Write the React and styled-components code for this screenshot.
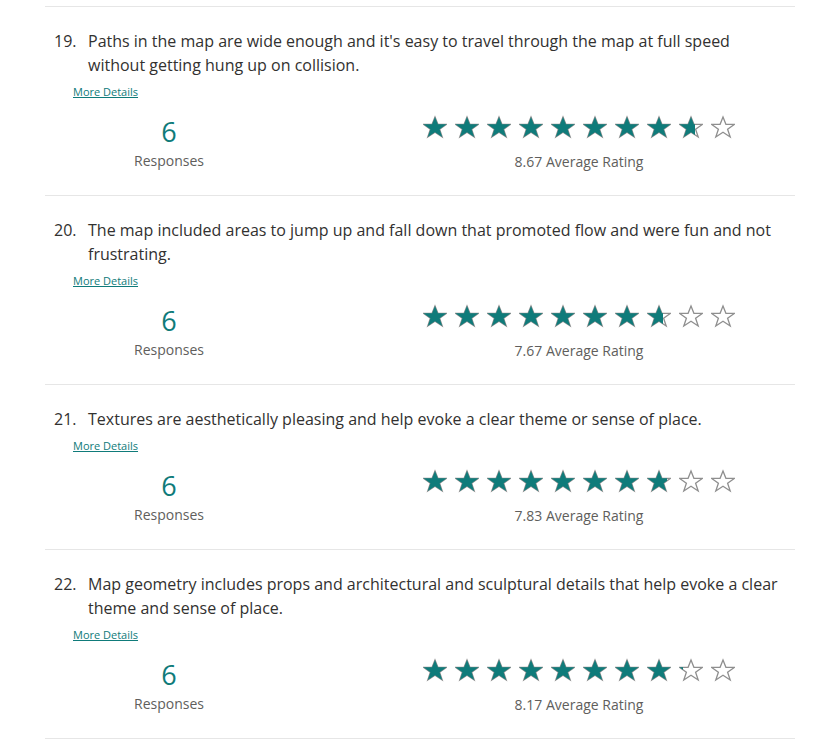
import React from "react";
import styled, { createGlobalStyle } from "styled-components";

const GlobalStyle = createGlobalStyle`
  body {
    margin: 0;
    background: #ffffff;
    font-family: "Open Sans", "Noto Sans", sans-serif;
    color: #333333;
  }
`;

const teal = "#0f7b7a";

const List = styled.div`
  width: 750px;
  margin-left: 45px;
  padding-top: 6px;
`;

const Item = styled.section`
  border-top: 1px solid #e6e6e6;
  padding: 22px 0 23px;
  &:last-child {
    border-bottom: 1px solid #e6e6e6;
  }
`;

const Question = styled.div`
  display: flex;
  padding-right: 12px;
  font-size: 16px;
  line-height: 24px;
  color: #323130;
`;

const Number = styled.span`
  flex: 0 0 34px;
  padding-left: 9px;
`;

const Text = styled.span`
  flex: 1;
`;

const DetailsLink = styled.a`
  display: inline-block;
  margin: 8px 0 0 28px;
  font-size: 11px;
  line-height: 14px;
  color: ${teal};
  text-decoration: underline;
  cursor: pointer;
`;

const Stats = styled.div`
  display: flex;
  align-items: flex-start;
  margin: 14px 0 0 28px;
`;

const Count = styled.div`
  width: 192px;
  display: flex;
  flex-direction: column;
  align-items: center;
`;

const CountValue = styled.div`
  font-size: 27px;
  line-height: 34px;
  color: ${teal};
`;

const Label = styled.div`
  margin-top: ${({ $top }) => $top || 0}px;
  font-size: 14px;
  line-height: 20px;
  color: #605e5c;
`;

const Rating = styled.div`
  margin-left: 158px;
  display: flex;
  flex-direction: column;
  align-items: center;
`;

const Stars = styled.div`
  display: flex;
  gap: 8px;
`;

const StarSvg = styled.svg`
  display: block;
  width: 24px;
  height: 24px;
`;

const points = "12,2 14.9,9.3 23.6,9.3 16.6,14.2 19.2,22 12,17.3 4.8,22 7.4,14.2 0.4,9.3 9.1,9.3";

function Star({ fill, id }) {
  return (
    <StarSvg viewBox="0 0 24 24">
      <defs>
        <clipPath id={id}>
          <rect x="0" y="0" width={24 * fill} height="24" />
        </clipPath>
      </defs>
      <polygon points={points} fill="#ffffff" stroke="#8f8f8f" strokeWidth="1.3" />
      {fill > 0 && <polygon points={points} fill={teal} clipPath={`url(#${id})`} />}
    </StarSvg>
  );
}

const items = [
  {
    n: 19,
    q: "Paths in the map are wide enough and it's easy to travel through the map at full speed without getting hung up on collision.",
    rating: 8.67,
  },
  {
    n: 20,
    q: "The map included areas to jump up and fall down that promoted flow and were fun and not frustrating.",
    rating: 7.67,
  },
  {
    n: 21,
    q: "Textures are aesthetically pleasing and help evoke a clear theme or sense of place.",
    rating: 7.83,
  },
  {
    n: 22,
    q: "Map geometry includes props and architectural and sculptural details that help evoke a clear theme and sense of place.",
    rating: 8.17,
  },
];

export default function App() {
  return (
    <>
      <GlobalStyle />
      <List>
        {items.map((it) => (
          <Item key={it.n}>
            <Question>
              <Number>{it.n}.</Number>
              <Text>{it.q}</Text>
            </Question>
            <DetailsLink>More Details</DetailsLink>
            <Stats>
              <Count>
                <CountValue>6</CountValue>
                <Label $top={2}>Responses</Label>
              </Count>
              <Rating>
                <Stars>
                  {Array.from({ length: 10 }, (_, i) => (
                    <Star
                      key={i}
                      id={`s${it.n}-${i}`}
                      fill={Math.max(0, Math.min(1, it.rating - i))}
                    />
                  ))}
                </Stars>
                <Label $top={13}>{it.rating} Average Rating</Label>
              </Rating>
            </Stats>
          </Item>
        ))}
      </List>
    </>
  );
}
